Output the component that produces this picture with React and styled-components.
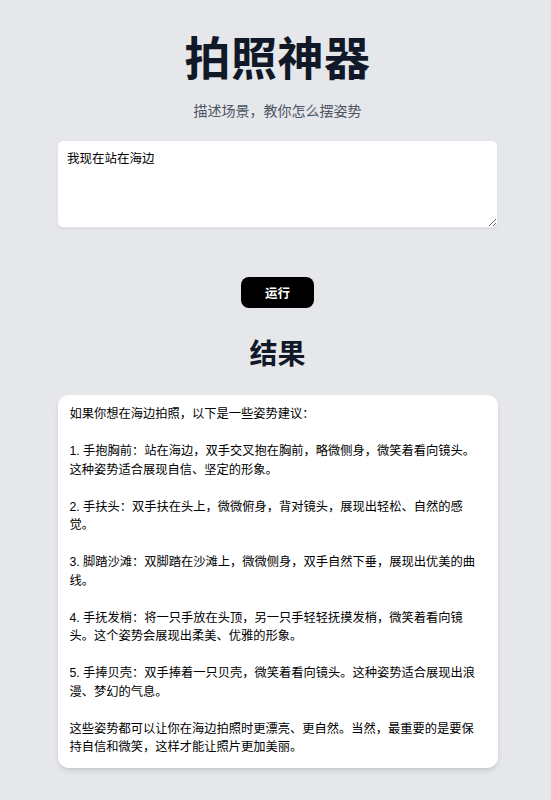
import React from "react";
import styled, { createGlobalStyle } from "styled-components";

const GlobalStyle = createGlobalStyle`
  html, body {
    margin: 0;
    padding: 0;
    background: #e5e7eb;
  }
  body {
    font-family: "Liberation Sans", "Noto Sans CJK SC", sans-serif;
    -webkit-font-smoothing: antialiased;
  }
`;

const Page = styled.main`
  display: flex;
  flex-direction: column;
  align-items: center;
  padding: 32px 53px 32px 57px;
  min-height: 100vh;
  box-sizing: border-box;
`;

const Title = styled.h1`
  margin: 0;
  font-size: 46px;
  line-height: 55px;
  font-weight: 700;
  color: #111827;
  letter-spacing: 0.5px;
`;

const Subtitle = styled.p`
  margin: 14px 0 0;
  font-size: 14px;
  line-height: 20px;
  color: #4b5563;
`;

const Prompt = styled.textarea`
  display: block;
  box-sizing: border-box;
  width: 441px;
  height: 88px;
  margin-top: 19px;
  padding: 9px 9px;
  border: 1px solid #e2e4e8;
  border-radius: 6px;
  background: #ffffff;
  box-shadow: 0 1px 2px rgba(0, 0, 0, 0.06);
  font-family: inherit;
  font-size: 12.5px;
  line-height: 18.5px;
  color: #000000;
  outline: none;
`;

const RunButton = styled.button`
  margin-top: 49px;
  width: 73px;
  height: 31px;
  border: none;
  border-radius: 8px;
  background: #000000;
  color: #ffffff;
  font-family: inherit;
  font-size: 12.5px;
  font-weight: 700;
  cursor: pointer;
`;

const SectionTitle = styled.h2`
  margin: 29px 0 0;
  font-size: 28px;
  line-height: 36px;
  font-weight: 700;
  color: #111827;
`;

const ResultCard = styled.section`
  box-sizing: border-box;
  width: 440px;
  margin-top: 22px;
  padding: 10px 13px 11px 12px;
  background: #ffffff;
  border-radius: 11px;
  box-shadow: 0 4px 6px -1px rgba(0, 0, 0, 0.1), 0 2px 4px -2px rgba(0, 0, 0, 0.1);
`;

const ResultText = styled.div`
  white-space: pre-wrap;
  font-size: 12.25px;
  line-height: 18.5px;
  color: #000000;
`;

const answer = `如果你想在海边拍照，以下是一些姿势建议：

1. 手抱胸前：站在海边，双手交叉抱在胸前，略微侧身，微笑着看向镜头。这种姿势适合展现自信、坚定的形象。

2. 手扶头：双手扶在头上，微微俯身，背对镜头，展现出轻松、自然的感觉。

3. 脚踏沙滩：双脚踏在沙滩上，微微侧身，双手自然下垂，展现出优美的曲线。

4. 手抚发梢：将一只手放在头顶，另一只手轻轻抚摸发梢，微笑着看向镜头。这个姿势会展现出柔美、优雅的形象。

5. 手捧贝壳：双手捧着一只贝壳，微笑着看向镜头。这种姿势适合展现出浪漫、梦幻的气息。

这些姿势都可以让你在海边拍照时更漂亮、更自然。当然，最重要的是要保持自信和微笑，这样才能让照片更加美丽。`;

export default function App() {
  return (
    <>
      <GlobalStyle />
      <Page>
        <Title>拍照神器</Title>
        <Subtitle>描述场景，教你怎么摆姿势</Subtitle>
        <Prompt defaultValue="我现在站在海边" />
        <RunButton type="button">运行</RunButton>
        <SectionTitle>结果</SectionTitle>
        <ResultCard>
          <ResultText>{answer}</ResultText>
        </ResultCard>
      </Page>
    </>
  );
}
